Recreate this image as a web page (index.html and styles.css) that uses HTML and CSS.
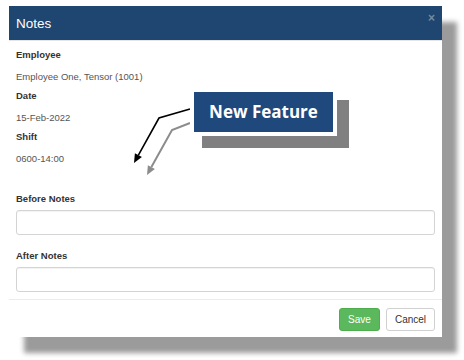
FILE: index.html
```html
<!DOCTYPE html>
<html lang="en">
<head>
<meta charset="UTF-8" />
<meta name="viewport" content="width=device-width, initial-scale=1" />
<title>Notes</title>
<link rel="stylesheet" href="styles.css">
</head>
<body>

<div class="page">
  <div class="modal">
    <div class="modal-header">
      <h4 class="modal-title">Notes</h4>
      <span class="close">&times;</span>
    </div>

    <div class="modal-body">
      <dl class="info">
        <dt>Employee</dt>
        <dd>Employee One, Tensor (1001)</dd>
        <dt>Date</dt>
        <dd>15-Feb-2022</dd>
        <dt>Shift</dt>
        <dd>0600-14:00</dd>
      </dl>

      <div class="form-group first">
        <label for="beforeNotes">Before Notes</label>
        <input type="text" id="beforeNotes" class="form-control">
      </div>
      <div class="form-group">
        <label for="afterNotes">After Notes</label>
        <input type="text" id="afterNotes" class="form-control">
      </div>
    </div>

    <div class="modal-footer">
      <button class="btn btn-save">Save</button>
      <button class="btn btn-cancel">Cancel</button>
    </div>
  </div>

  <!-- annotation drawn over the dialog -->
  <svg class="arrows" width="464" height="360" viewBox="0 0 464 360">
    <polyline points="190,109 159,118 138.4,155.1" fill="none" stroke="#000" stroke-width="1.6" />
    <polygon points="134,163 141.9,157 134.9,153.2" fill="#000" />
    <polyline points="190,123 172,130 151.4,167.1" fill="none" stroke="#8c8c8c" stroke-width="2" />
    <polygon points="147,175 154.9,169 147.9,165.2" fill="#8c8c8c" />
  </svg>
  <div class="callout">New Feature</div>
</div>

</body>
</html>
```

FILE: styles.css
```css
body {
  margin: 0;
  font-family: 'Liberation Sans', Arial, sans-serif;
  background: #fff;
}

.page {
  position: relative;
  width: 464px;
  height: 360px;
  overflow: hidden;
}

.modal {
  margin: 6px 0 0 9px;
  width: 433px;
  background: #fff;
  box-shadow: 15px 16px 5px #9b9b9b;
}

.modal-header {
  display: flex;
  justify-content: space-between;
  height: 34px;
  padding: 0 7px;
  background: #1e4670;
  border-bottom: 1px solid #e5e5e5;
}

.modal-title {
  margin: 0;
  align-self: center;
  font-size: 13.5px;
  font-weight: 400;
  color: #fff;
}

.close {
  margin-top: 5px;
  font-size: 12px;
  font-weight: 700;
  line-height: 14px;
  color: #7689a0;
}

.modal-body {
  padding: 7px 7px 7px;
}

.info {
  margin: 0;
  font-size: 9.5px;
  line-height: 14px;
}

.info dt {
  font-weight: 700;
  color: #333;
}

.info dd {
  margin: 8px 0 5px;
  color: #555;
}

.form-group {
  margin-top: 14px;
}

.form-group.first {
  margin-top: 26px;
}

.form-group label {
  display: block;
  margin-bottom: 4px;
  font-size: 9.5px;
  line-height: 14px;
  font-weight: 700;
  color: #333;
}

.form-control {
  display: block;
  box-sizing: border-box;
  width: 100%;
  height: 25px;
  margin: 0;
  border: 1px solid #d4d4d4;
  border-radius: 3px;
  box-shadow: inset 0 1px 1px rgba(0,0,0,0.05);
  background: #fff;
}

.modal-footer {
  display: flex;
  justify-content: flex-end;
  gap: 6px;
  padding: 8px 7px 6px;
  border-top: 1px solid #ececec;
}

.btn {
  height: 23px;
  padding: 0 6px;
  font-family: 'Liberation Sans', Arial, sans-serif;
  font-size: 10px;
  border-radius: 3px;
  cursor: pointer;
}

.btn-save {
  width: 41px;
  background: #5cb85c;
  border: 1px solid #4cae4c;
  color: #fff;
}

.btn-cancel {
  width: 49px;
  background: #fff;
  border: 1px solid #d0d0d0;
  color: #333;
}

.arrows {
  position: absolute;
  left: 0;
  top: 0;
  pointer-events: none;
}

.callout {
  position: absolute;
  left: 190px;
  top: 88px;
  width: 139px;
  height: 40px;
  border: 4px solid #fff;
  background: #1f497d;
  box-shadow: 12px 12px 0 #808080;
  color: #fff;
  font-family: 'Open Sans', sans-serif;
  font-weight: 700;
  font-size: 17px;
  line-height: 40px;
  text-align: center;
}
```
